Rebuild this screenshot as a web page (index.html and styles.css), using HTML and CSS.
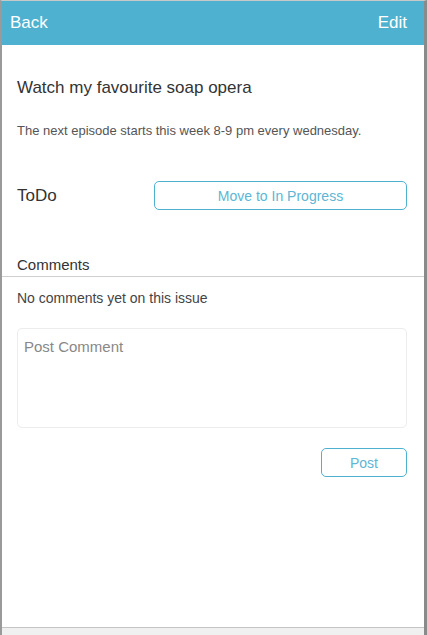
FILE: index.html
```html
<!DOCTYPE html>
<html lang="en">

<head>
    <meta charset="UTF-8">
    <meta name="viewport" content="width=device-width, initial-scale=1.0">
    <title>Issue</title>
    <link rel="stylesheet" href="styles.css">
</head>

<body>
    <div class="frame">
        <div class="screen">
            <header class="topbar">
                <span class="nav-link">Back</span>
                <span class="nav-link">Edit</span>
            </header>

            <div class="issue">
                <h1 class="issue-title">Watch my favourite soap opera</h1>
                <p class="issue-desc">The next episode starts this week 8-9 pm every wednesday.</p>
                <div class="status-row">
                    <span class="status">ToDo</span>
                    <button type="button" class="btn-outline btn-move">Move to In Progress</button>
                </div>
            </div>

            <div class="comments">
                <h2 class="comments-head">Comments</h2>
                <p class="comments-empty">No comments yet on this issue</p>
                <textarea class="comment-box" placeholder="Post Comment"></textarea>
                <div class="post-row">
                    <button type="button" class="btn-outline btn-post">Post</button>
                </div>
            </div>
        </div>
        <div class="statusbar"></div>
    </div>
</body>

</html>
```

FILE: styles.css
```css
:root {
    --primary-color: #4fb1d0;
    --text-color: #333333;
    --muted-color: #555555;
    --frame-color: #9a9a9a;
    --line-color: #cfcfcf;
}

body {
    margin: 0;
    padding: 0;
    font-family: Arial, "Liberation Sans", sans-serif;
    background-color: #ffffff;
}

.frame {
    width: 427px;
    height: 635px;
    display: flex;
    flex-direction: column;
    box-sizing: border-box;
    border-top: 1px solid #c8c8c8;
    border-left: 2px solid var(--frame-color);
    border-right: 3px solid #8a8a8a;
}

.screen {
    flex: 1;
    display: flex;
    flex-direction: column;
    background-color: #ffffff;
}

.topbar {
    height: 44px;
    display: flex;
    justify-content: space-between;
    align-items: center;
    padding: 0 17px 0 8px;
    background-color: var(--primary-color);
}

.nav-link {
    color: #ffffff;
    font-size: 17px;
}

.issue {
    padding: 0 17px 0 15px;
}

.issue-title {
    margin: 33px 0 0;
    font-size: 17px;
    font-weight: normal;
    color: var(--text-color);
}

.issue-desc {
    margin: 25px 0 0;
    font-size: 13px;
    color: var(--muted-color);
}

.status-row {
    display: flex;
    justify-content: space-between;
    align-items: center;
    margin-top: 43px;
}

.status {
    font-size: 17px;
    color: var(--text-color);
}

.btn-outline {
    background-color: #ffffff;
    border: 1px solid var(--primary-color);
    border-radius: 5px;
    color: #5cb6d4;
    font-family: inherit;
    font-size: 14px;
    cursor: pointer;
}

.btn-move {
    width: 253px;
    height: 29px;
}

.comments {
    margin-top: 46px;
}

.comments-head {
    margin: 0;
    padding: 0 15px 3px;
    font-size: 15px;
    font-weight: normal;
    color: var(--text-color);
    border-bottom: 1px solid var(--line-color);
}

.comments-empty {
    margin: 13px 15px 0;
    font-size: 14px;
    color: #444444;
}

.comment-box {
    display: block;
    margin: 22px 15px 0;
    width: 390px;
    height: 100px;
    box-sizing: border-box;
    padding: 9px 6px;
    border: 1px solid #ececec;
    border-radius: 5px;
    font-family: inherit;
    font-size: 15px;
    resize: none;
}

.comment-box::placeholder {
    color: #888888;
}

.post-row {
    display: flex;
    justify-content: flex-end;
    padding: 20px 17px 0;
}

.btn-post {
    width: 86px;
    height: 29px;
    font-size: 14px;
}

.statusbar {
    height: 7px;
    background-color: #f0f0f0;
    border-top: 1px solid #c4c4c4;
}
```
